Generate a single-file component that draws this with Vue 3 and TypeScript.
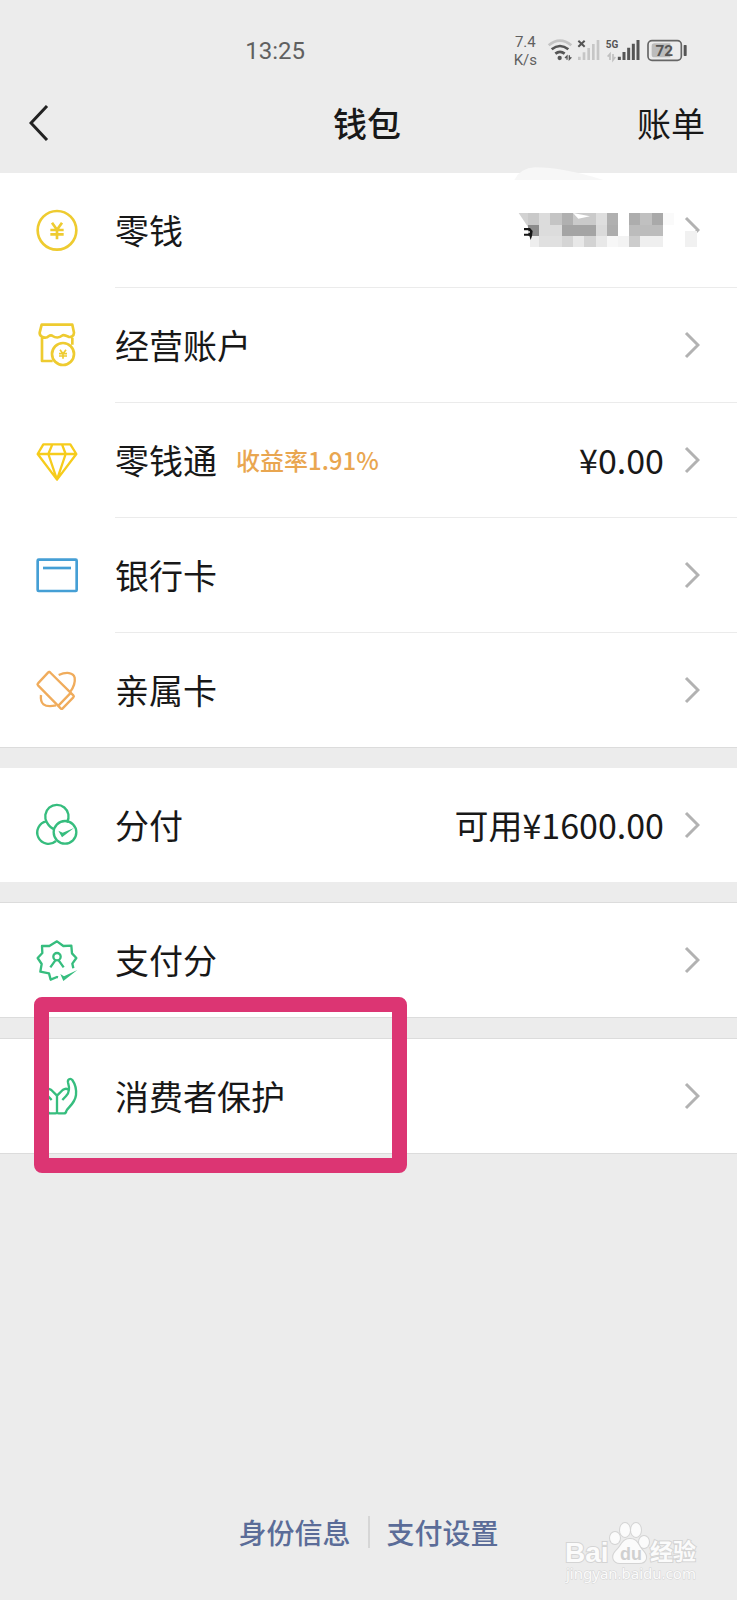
<script setup lang="ts">
interface WalletItem {
  id: string
  label: string
  note?: string
  value?: string
}

interface WalletSection {
  id: string
  lined: boolean
  items: WalletItem[]
}

const sections: WalletSection[] = [
  {
    id: 'assets',
    lined: false,
    items: [
      { id: 'balance', label: '零钱' },
      { id: 'business', label: '经营账户' },
      { id: 'fund', label: '零钱通', note: '收益率1.91%', value: '¥0.00' },
      { id: 'bank', label: '银行卡' },
      { id: 'family', label: '亲属卡' },
    ],
  },
  { id: 'credit', lined: false, items: [{ id: 'fenfu', label: '分付', value: '可用¥1600.00' }] },
  { id: 'score', lined: true, items: [{ id: 'score', label: '支付分' }] },
  { id: 'protect', lined: true, items: [{ id: 'protect', label: '消费者保护' }] },
]

type Cell = [x: number, y: number, w: number, h: number, fill: string]

const mosaic: Cell[] = [
  [84, 159, 33, 35, '#c9c9c9'], [117, 159, 34, 35, '#dcdcdc'], [151, 159, 35, 35, '#c4c4c4'],
  [186, 159, 33, 35, '#b0b0b0'], [219, 159, 68, 35, '#cacaca'], [287, 159, 34, 35, '#dedede'],
  [321, 159, 33, 35, '#b0b0b0'], [387, 159, 34, 35, '#adadad'], [421, 159, 34, 35, '#c0c0c0'],
  [455, 159, 34, 35, '#a9a9a9'], [489, 159, 34, 35, '#fafafa'],
  [84, 194, 33, 33, '#8c8c8c'], [117, 194, 69, 33, '#dcdcdc'], [186, 194, 101, 33, '#a4a4a4'],
  [287, 194, 34, 33, '#dadada'], [321, 194, 33, 33, '#adadad'], [387, 194, 102, 33, '#bcbcbc'],
  [90, 227, 27, 34, '#eeeeee'], [117, 227, 69, 34, '#e0e0e0'], [186, 227, 33, 34, '#d5d5d5'],
  [219, 227, 34, 34, '#e8e8e8'], [253, 227, 34, 34, '#d3d3d3'], [287, 227, 34, 34, '#e8e8e8'],
  [321, 227, 33, 34, '#f7f7f7'], [354, 227, 33, 34, '#f3f3f3'], [387, 227, 34, 34, '#cccccc'],
  [421, 227, 68, 34, '#efefef'], [556, 214, 34, 47, '#f1f1f1'],
]
</script>

<template>
  <div class="page">
    <div class="status">
      <span class="time">13:25</span>
      <span class="speed">7.4<br />K/s</span>
      <svg class="signals" viewBox="976 48 432 84" aria-hidden="true">
        <g fill="none" stroke-width="8">
          <path d="M987 76Q1021 48 1055 76" stroke="#c4c4c4" />
          <path d="M996 88Q1021 68 1046 88M1007 101Q1021 90 1035 101" stroke="#555" />
        </g>
        <circle cx="1020" cy="114" r="6.5" fill="#555" />
        <path d="M1042 119V108L1036 114M1049 106V118L1055 112" fill="none" stroke="#555" stroke-width="4" />
        <path d="M1076 62L1095 80M1095 62L1076 80" stroke="#555" stroke-width="6" />
        <path d="M1079 120V110M1093 120V97M1107 120V84M1121 120V72M1135 120V60" stroke="#c6c6c6" stroke-width="8" />
        <text x="1158" y="84" class="net">5G</text>
        <path d="M1171 120V102L1164 110M1180 102V120L1187 111" fill="none" stroke="#c0c0c0" stroke-width="5" />
        <path d="M1199 120V110M1213 120V96M1227 120V83M1241 120V71M1255 120V60" stroke="#555" stroke-width="9" />
        <rect x="1285" y="62" width="100" height="59" rx="12" fill="none" stroke="#666" stroke-width="5" />
        <path d="M1304 70H1352V112H1304Q1296 112 1296 104V78Q1296 70 1304 70Z" fill="#bcbcbc" />
        <rect x="1392" y="75" width="9" height="33" rx="2" fill="#555" />
        <text x="1334" y="109" text-anchor="middle" class="charge">72</text>
      </svg>
    </div>

    <header class="nav">
      <button class="back" type="button" aria-label="返回">
        <svg viewBox="0 0 20 36" aria-hidden="true">
          <path d="M18 1L2 18L18 35" fill="none" stroke="#222" stroke-width="3" />
        </svg>
      </button>
      <h1>钱包</h1>
      <a class="bill" href="#bill">账单</a>
    </header>

    <main>
      <section v-for="section in sections" :key="section.id" class="group" :class="[section.id, { lined: section.lined }]">
        <button v-for="item in section.items" :key="item.id" class="row" type="button">
          <svg v-if="item.id === 'balance'" class="icon gold" viewBox="39 45 144 144" aria-hidden="true">
            <circle cx="111" cy="118" r="58" />
            <path d="M96 95L111 116L126 95M111 116V145M91 117H131M91 130H131" />
          </svg>
          <svg v-else-if="item.id === 'business'" class="icon gold" viewBox="39 390 144 144" aria-hidden="true">
            <path d="M65 401H157L162 425C162 435 152 440 145 437C137 435 132 429 126 434C119 441 106 441 98 435C91 429 88 435 81 439C70 442 58 435 59 425ZM66 440V510H98M157 440V461" />
            <circle cx="129" cy="489" r="33" />
            <path class="fine" d="M120 476L129 488L138 476M129 488V503M117 488H141M117 495H141" />
          </svg>
          <svg v-else-if="item.id === 'fund'" class="icon gold gem" viewBox="39 45 144 144" aria-hidden="true">
            <path d="M70 70H151L169 99L111 176L53 99ZM53 99H169M97 70L85 99L111 176L137 99L126 70" />
          </svg>
          <svg v-else-if="item.id === 'bank'" class="icon blue" viewBox="39 390 144 144" aria-hidden="true">
            <rect x="53" y="416" width="117" height="94" rx="3" />
            <path d="M69 441H153" />
          </svg>
          <svg v-else-if="item.id === 'family'" class="icon orange" viewBox="39 45 144 144" aria-hidden="true">
            <path d="M89 63L160 133Q163 136 160 139L128 172Q125 175 122 172L54 103Q51 100 54 97L84 65Q87 61 91 65ZM116 163L150 128" />
            <path d="M116 72C139 62 160 64 164 80C166 94 160 110 151 122M63 132C60 157 71 171 108 163" />
          </svg>
          <svg v-else-if="item.id === 'fenfu'" class="icon green" viewBox="39 450 144 144" aria-hidden="true">
            <path d="M81 515A35 35 0 1 1 141 514M79 511A34 34 0 1 0 108 570M81 515Q90 531 104 535" />
            <circle cx="135" cy="544" r="34" />
            <path d="M115 539L128 545L162 531L126 559Z" class="solid" />
          </svg>
          <svg v-else-if="item.id === 'score'" class="icon green" viewBox="39 45 144 144" aria-hidden="true">
            <path d="M114 169L111 168L92 176L87 157L61 152L65 129L53 111L67 96L66 75L88 75L111 61L130 75L154 74L156 97L169 111L157 128L160 142" />
            <circle cx="111" cy="107" r="11" />
            <path d="M106 118L91 139M116 118L131 139" />
            <path d="M121 159L132 166L172 147L130 180Z" class="solid" />
          </svg>
          <svg v-else class="icon green" viewBox="39 153 144 144" aria-hidden="true">
            <path d="M111 224L128 207Q139 199 146 207M111 224V274Q111 277 116 277H132Q138 277 139 270C142 261 165 248 168 222C170 202 164 187 157 177C151 170 142 175 144 184C149 201 148 215 139 224L127 237" />
            <path d="M111 224L94 207Q83 199 76 207M111 274Q111 277 106 277H90Q84 277 83 270C80 261 57 248 54 222C52 202 58 187 65 177C71 170 80 175 78 184C73 201 74 215 83 224L95 237" />
          </svg>
          <span class="cell">
            <span class="label">{{ item.label }}</span>
            <span v-if="item.note" class="note">{{ item.note }}</span>
            <span v-if="item.value" class="value">{{ item.value }}</span>
            <svg class="arrow" viewBox="0 0 16 28" aria-hidden="true">
              <path d="M2 2L14 14L2 26" fill="none" stroke="#b2b2b2" stroke-width="3" />
            </svg>
          </span>
        </button>

        <svg v-if="section.id === 'assets'" class="mask" viewBox="0 0 711 330" aria-hidden="true">
          <path d="M43 60Q62 24 105 22Q190 22 310 60Z" fill="#f7f7f7" />
          <path d="M56 159H90V210Z" fill="#d2d2d2" />
          <rect v-for="(c, i) in mosaic" :key="i" :x="c[0]" :y="c[1]" :width="c[2]" :height="c[3]" :fill="c[4]" shape-rendering="crispEdges" />
          <path d="M72 204H90L98 213L96 228L92 240L88 227H72V221H86V211H72Z" fill="#161616" />
          <path d="M76 214H90V218H76Z" fill="#fff" />
          <path d="M219 159L270 169L235 176Z" fill="#fff" />
        </svg>
        <div v-if="section.id === 'protect'" class="highlight"></div>
      </section>
    </main>

    <footer class="footer">
      <a href="#identity">身份信息</a>
      <i class="bar"></i>
      <a href="#settings">支付设置</a>
    </footer>

    <svg class="watermark" viewBox="0 0 140 68" role="img" aria-label="Baidu经验">
      <g class="ink">
        <text x="0" y="42" class="brand">Bai</text>
        <ellipse cx="50" cy="18" rx="5" ry="6" />
        <ellipse cx="60" cy="10" rx="5" ry="7" />
        <ellipse cx="71" cy="10" rx="5" ry="7" />
        <ellipse cx="79" cy="22" rx="5" ry="6" />
        <path d="M65 19C57 19 56 27 51 31C46 36 48 43 55 43H74C82 43 83 36 78 31C73 26 73 19 65 19Z" />
        <text x="85" y="40" class="cn">经验</text>
        <text x="1" y="59" class="url">jingyan.baidu.com</text>
      </g>
      <text x="55" y="40" class="du">du</text>
    </svg>
  </div>
</template>

<style>
body {
  margin: 0;
  background: #ececec;
}
</style>

<style scoped>
.page {
  position: relative;
  display: flex;
  flex-direction: column;
  min-height: 100vh;
  background: #ececec;
  color: #181818;
  font-family: "Noto Sans CJK SC", "Noto Sans", sans-serif;
}

.page * {
  box-sizing: border-box;
}

.status {
  display: flex;
  align-items: center;
  height: 76px;
  padding: 24px 48px 0 33%;
  color: #606060;
}

.time {
  padding: 2px 0 0 2px;
  font: 24px/28px Roboto, sans-serif;
}

.speed {
  margin-left: auto;
  margin-right: 8px;
  padding-top: 1px;
  font: 15px/18px Roboto, sans-serif;
  text-align: center;
}

.signals {
  width: 144px;
  height: 28px;
}

.net {
  font: 700 30px Roboto, sans-serif;
  fill: #555;
}

.charge {
  font: 700 46px Roboto, sans-serif;
  fill: #555;
}

.nav {
  display: grid;
  grid-template-columns: 1fr auto 1fr;
  align-items: center;
  height: 97px;
  padding: 0 32px 4px 29px;
}

.nav h1 {
  margin: 0;
  font-size: 34px;
  font-weight: 500;
  line-height: 48px;
}

.back {
  width: 20px;
  height: 36px;
  padding: 0;
  border: 0;
  background: none;
}

.back svg {
  display: block;
}

.bill {
  justify-self: end;
  color: inherit;
  font-size: 34px;
  line-height: 48px;
  text-decoration: none;
}

main {
  display: flex;
  flex-direction: column;
  gap: 20px;
}

.group {
  position: relative;
  background: #fff;
}

.lined {
  border-top: 1px solid #dcdcdc;
  border-bottom: 1px solid #dcdcdc;
}

.assets {
  border-bottom: 1px solid #dcdcdc;
}

.row {
  display: flex;
  align-items: center;
  gap: 34px;
  width: 100%;
  padding: 0 0 0 33px;
  border: 0;
  background: none;
  color: inherit;
  font: inherit;
  text-align: left;
}

.cell {
  display: flex;
  flex: 1;
  align-items: center;
  height: 114px;
  padding-right: 37px;
}

.row + .row .cell {
  height: 115px;
  border-top: 1px solid #ebebeb;
}

.icon {
  flex: none;
  width: 48px;
  height: 48px;
  fill: none;
  stroke-width: 8;
  stroke-linejoin: round;
}

.gold {
  stroke: #eecb30;
}

.gem {
  stroke: #f6cc1c;
  stroke-width: 7;
}

.blue {
  stroke: #459fd5;
}

.orange {
  stroke: #f0ac5c;
  stroke-width: 7;
}

.green {
  stroke: #36bd7e;
  stroke-width: 7;
}

.fine {
  stroke-width: 5;
}

.solid {
  fill: #36bd7e;
  stroke: none;
}

.label {
  font-size: 34px;
  line-height: 48px;
}

.note {
  margin-left: 19px;
  color: #e9a650;
  font-size: 24px;
  font-weight: 500;
  line-height: 48px;
}

.value {
  margin-left: auto;
  font-size: 34px;
  line-height: 48px;
}

.arrow {
  flex: none;
  width: 16px;
  height: 28px;
  margin-left: auto;
}

.value + .arrow {
  margin-left: 20px;
}

.mask {
  position: absolute;
  top: -13px;
  right: 0;
  width: 237px;
  height: 110px;
  pointer-events: none;
}

.highlight {
  position: absolute;
  top: -42px;
  left: 34px;
  width: 373px;
  height: 176px;
  border: 15px solid #dc3573;
  border-radius: 8px;
  pointer-events: none;
}

.footer {
  display: flex;
  align-items: center;
  justify-content: center;
  gap: 17px;
  margin-top: auto;
  padding: 40px 0 48px;
  font-size: 28px;
  font-weight: 500;
  line-height: 40px;
}

.footer a {
  color: #5b6c98;
  text-decoration: none;
}

.bar {
  width: 2px;
  height: 32px;
  background: #d6d6d6;
}

.watermark {
  position: absolute;
  right: 32px;
  bottom: 12px;
  width: 140px;
  height: 68px;
}

.ink {
  fill: #fbfbfb;
  stroke: #d4d4d4;
  stroke-width: 2;
  paint-order: stroke;
}

.brand {
  font: 700 28px "Liberation Sans", sans-serif;
}

.cn {
  font: 700 23px "Noto Sans CJK SC", sans-serif;
}

.url {
  font: 15px "Noto Sans", sans-serif;
  stroke-width: 1;
}

.du {
  font: 700 18px "Liberation Sans", sans-serif;
  fill: #d0d0d0;
}
</style>
